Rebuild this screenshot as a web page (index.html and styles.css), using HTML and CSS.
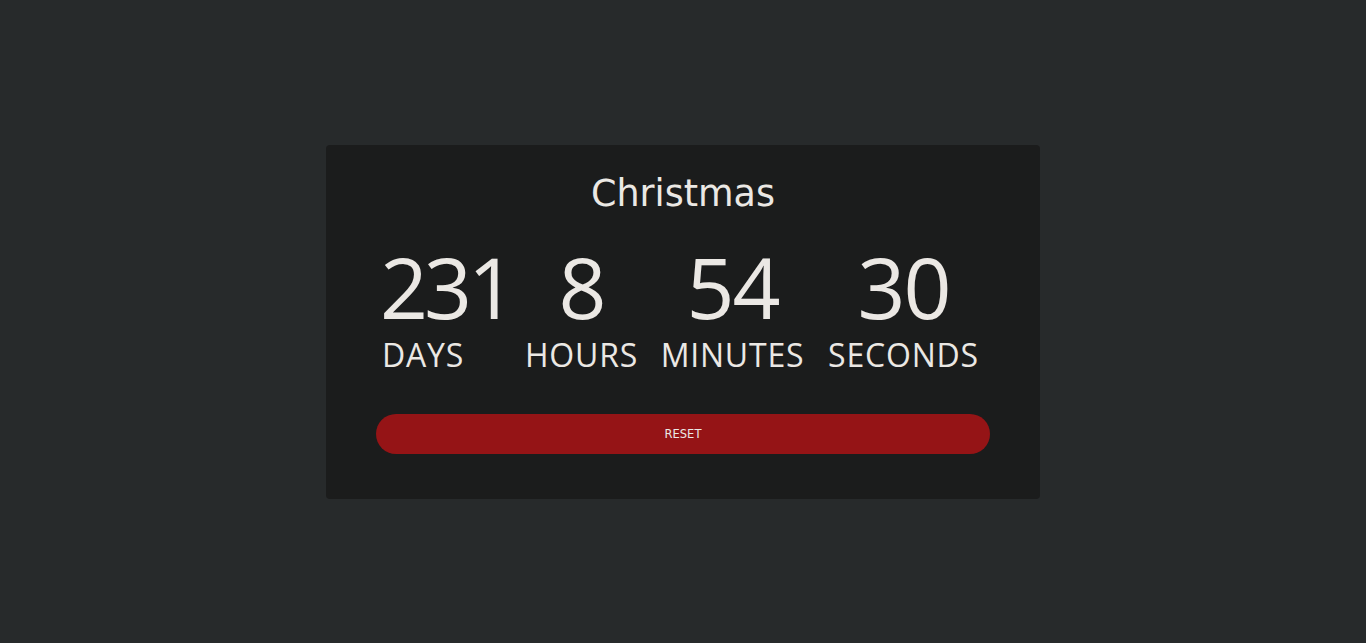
FILE: index.html
```html
<!DOCTYPE html>
<html lang="en">
<head>
<meta charset="utf-8">
<title>Countdown</title>
<link rel="stylesheet" href="styles.css">
</head>
<body>
<main class="page">
  <section class="card">
    <h1 class="title">Christmas</h1>
    <div class="timer">
      <div class="unit unit-days"><span class="num">231</span><span class="label">DAYS</span></div>
      <div class="unit unit-hours"><span class="num">8</span><span class="label">HOURS</span></div>
      <div class="unit unit-minutes"><span class="num">54</span><span class="label">MINUTES</span></div>
      <div class="unit unit-seconds"><span class="num">30</span><span class="label">SECONDS</span></div>
    </div>
    <button class="reset">RESET</button>
  </section>
</main>
</body>
</html>
```
FILE: styles.css
```css
html, body {
  margin: 0;
  padding: 0;
  height: 100%;
}
body {
  background: #272a2b;
  color: #ebe8e4;
  font-family: "DejaVu Sans", sans-serif;
}
.page {
  height: 643px;
  display: flex;
  align-items: center;
  justify-content: center;
}
.card {
  width: 714px;
  box-sizing: border-box;
  padding: 0 50px 45px;
  background: #1b1c1c;
  border-radius: 4px;
  display: flex;
  flex-direction: column;
  align-items: stretch;
  height: 354px;
  margin-top: 1px;
}
.title {
  margin: 27px 0 0;
  font-weight: 400;
  font-size: 36.5px;
  line-height: 44px;
  text-align: center;
  color: #ebe8e4;
}
.timer {
  display: flex;
  justify-content: center;
  gap: 26px;
  margin-top: 29px;
  margin-right: 5px;
  font-family: "Open Sans", sans-serif;
}
.unit {
  display: flex;
  flex-direction: column;
  align-items: center;
  flex: none;
}
.unit-days {
  width: 115px;
  align-items: flex-start;
  margin-right: 3px;
}
.unit-hours { width: 111px; }
.unit-minutes { width: 139px; }
.unit-seconds { width: 151px; }
.num {
  font-size: 84px;
  line-height: 84px;
  font-weight: 400;
  letter-spacing: -2px;
  white-space: nowrap;
}
.unit-days .num {
  letter-spacing: -4px;
  margin-left: -2px;
}
.label {
  font-size: 32px;
  line-height: 36px;
  margin-top: 8px;
  letter-spacing: 0.8px;
  white-space: nowrap;
}
.reset {
  margin-top: auto;
  height: 40px;
  border: none;
  border-radius: 20px;
  background: #951416;
  color: #ebe8e4;
  font-family: "DejaVu Sans", sans-serif;
  font-size: 11.5px;
  padding: 0;
}
```
